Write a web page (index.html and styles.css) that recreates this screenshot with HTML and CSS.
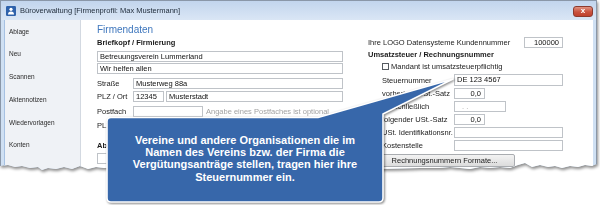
FILE: index.html
```html
<!DOCTYPE html>
<html lang="de">
<head>
<meta charset="utf-8">
<title>Büroverwaltung</title>
<link rel="stylesheet" href="styles.css">
</head>
<body>
<div class="stage">
  <div class="shot">
    <div class="window">
      <div class="titlebar">
        <svg class="appicon" width="10" height="10" viewBox="0 0 10 10">
          <rect x="0" y="0" width="10" height="10" rx="1.2" fill="#2f62ab"/>
          <circle cx="5" cy="3.3" r="1.6" fill="#fff"/>
          <path d="M2 8.4 Q2 5.4 5 5.4 Q8 5.4 8 8.4 Z" fill="#fff"/>
        </svg>
        <span class="title">Büroverwaltung [Firmenprofil: Max Mustermann]</span>
        <span class="close">x</span>
      </div>
      <div class="body">
        <nav class="sidebar">
          <div class="nav-item">Ablage</div>
          <div class="nav-item">Neu</div>
          <div class="nav-item">Scannen</div>
          <div class="nav-item">Aktennotizen</div>
          <div class="nav-item">Wiedervorlagen</div>
          <div class="nav-item">Konten</div>
        </nav>
        <main class="main">
          <section class="col-left">
            <h1 class="section-title">Firmendaten</h1>
            <h2 class="group-title">Briefkopf / Firmierung</h2>
            <div class="field first">Betreuungsverein Lummerland</div>
            <div class="field second">Wir helfen allen</div>
            <div class="row r-street"><span class="lbl">Straße</span><div class="field grow">Musterweg 88a</div></div>
            <div class="row r-plz"><span class="lbl">PLZ / Ort</span><div class="field plz">12345</div><div class="field grow">Musterstadt</div></div>
            <div class="row r-pf"><span class="lbl">Postfach</span><div class="field pf"></div><span class="hint">Angabe eines Postfaches ist optional</span></div>
            <div class="row r-pfplz"><span class="lbl">PLZ / Ort</span><div class="field plz"></div><div class="field grow"></div></div>
            <h2 class="group-title ab">Abweichende Rechnungsanschrift</h2>
            <div class="field ab-field"></div>
          </section>
          <section class="col-right">
            <div class="kd-row"><span class="lbl">Ihre LOGO Datensysteme Kundennummer</span><div class="field num kdnr">100000</div></div>
            <h2 class="group-title ust">Umsatzsteuer / Rechnungsnummer</h2>
            <div class="check"><span class="box"></span><span>Mandant ist umsatzsteuerpflichtig</span></div>
            <div class="tax-grid">
              <span class="lbl">Steuernummer</span><div class="field tall">DE 123 4567</div>
              <span class="lbl">vorheriger USt.-Satz</span><div class="field num short">0,0</div>
              <span class="lbl">ausschließlich</span><div class="field date">. .</div>
              <span class="lbl">folgender USt.-Satz</span><div class="field num short">0,0</div>
              <span class="lbl">USt. Identifikationsnr.</span><div class="field"></div>
              <span class="lbl">Kostenstelle</span><div class="field"></div>
            </div>
            <div class="btn">Rechnungsnummern Formate...</div>
          </section>
        </main>
      </div>
    </div>
  </div>
  <svg class="callout-shape" width="600" height="205" viewBox="0 0 600 205">
    <path d="M111 117.5 H318 L453 79 L383 114 V198 Q383 202 379 202 H111 Q107 202 107 198 V121.5 Q107 117.5 111 117.5 Z" fill="#3767aa" stroke="#ffffff" stroke-width="1.6" stroke-linejoin="round"/>
  </svg>
  <div class="callout-text">Vereine und andere Organisationen die im<br>Namen des Vereins bzw. der Firma die<br>Vergütungsanträge stellen, tragen hier ihre<br>Steuernummer ein.</div>
</div>
</body>
</html>
```
FILE: styles.css
```css
* { box-sizing: border-box; margin: 0; padding: 0; }
html, body { width: 600px; height: 205px; overflow: hidden; background: #ffffff; }
body { font-family: "Liberation Sans", Arial, sans-serif; color: #1b1b1b; }

.stage { position: relative; width: 600px; height: 205px; }

.shot { width: 597px; filter: drop-shadow(1px 2px 1.5px rgba(0, 0, 0, 0.45)); }

.window {
  width: 597px;
  height: 172px;
  border: 1px solid #8a97a8;
  border-bottom: none;
  background: #cfe0f3;
  display: flex;
  flex-direction: column;
  clip-path: polygon(0 0, 597px 0, 597px 164px, 592px 166px, 585px 165px, 578px 167px, 570px 166px, 562px 168px, 555px 166px, 548px 167px, 540px 165px, 532px 167px, 525px 163px, 518px 165px, 510px 168px, 500px 167px, 490px 168px, 480px 167px, 470px 169px, 460px 168px, 450px 167px, 440px 168px, 420px 168px, 380px 169px, 300px 169px, 200px 169px, 110px 168px, 104px 168px, 96px 167px, 88px 169px, 80px 166px, 72px 169px, 64px 167px, 56px 169px, 48px 168px, 42px 170px, 38px 167px, 30px 168px, 22px 166px, 15px 167px, 8px 165px, 0 166px);
}

.titlebar {
  height: 19px;
  flex: none;
  display: flex;
  align-items: center;
  padding-left: 5px;
  background: linear-gradient(#c2d5ed, #dae6f5);
}
.appicon { flex: none; margin-right: 4px; margin-top: 1px; }
.title { font-size: 7.5px; color: #1e2a38; }
.close {
  margin-left: auto;
  margin-right: 3px;
  margin-top: 2px;
  width: 20px;
  height: 11px;
  border: 1px solid #8c3a2e;
  border-radius: 3px;
  background: linear-gradient(#e09280, #c9513d 55%, #c0412d);
  color: #ffffff;
  font-size: 8px;
  font-weight: bold;
  line-height: 8px;
  text-align: center;
}

.body { flex: 1; display: flex; padding: 0 3px 0 3px; }

.sidebar {
  width: 77px;
  flex: none;
  background: #eff2f6;
  border-left: 1px solid #a6c1e2;
  border-right: 1px solid #d3d9e1;
  padding-top: 0.5px;
}
.nav-item { height: 22.8px; line-height: 22.8px; padding-left: 4px; font-size: 6.5px; color: #2a2a2a; }

.main { flex: 1; background: #ffffff; display: flex; padding: 4px 0 0 16px; }

.lbl { font-size: 7.5px; color: #1b1b1b; white-space: nowrap; }

.field {
  height: 11px;
  border: 1px solid #bfc3c8;
  background: #ffffff;
  font-size: 7.5px;
  line-height: 9px;
  padding: 0 2px;
  color: #111111;
  white-space: nowrap;
  overflow: hidden;
}
.field.num { text-align: right; padding-right: 3px; }

.col-left { width: 246px; flex: none; display: flex; flex-direction: column; }
.section-title { font-size: 10px; line-height: 12px; font-weight: normal; color: #3f77bd; }
.group-title { font-size: 7.5px; line-height: 10px; font-weight: bold; color: #1b1b1b; margin-top: 2px; }
.field.first { margin-top: 3px; }
.field.second { margin-top: 1px; }
.row { display: flex; align-items: center; gap: 2px; }
.row .lbl { width: 34px; flex: none; }
.row .grow { flex: 1; }
.r-street { margin-top: 4px; }
.r-plz { margin-top: 2px; }
.r-pf { margin-top: 4px; }
.r-pfplz { margin-top: 3px; }
.field.plz { width: 31px; flex: none; }
.field.pf { width: 70px; flex: none; }
.hint { font-size: 7.5px; color: #a2a2a2; margin-left: 1px; white-space: nowrap; }
.group-title.ab { margin-top: 10px; }
.field.ab-field { margin-top: 2px; }

.col-right { width: 195px; flex: none; margin-left: 25px; padding-top: 13px; display: flex; flex-direction: column; }
.kd-row { display: flex; align-items: center; justify-content: space-between; }
.field.kdnr { width: 39px; }
.group-title.ust { margin-top: 2px; line-height: 9px; }
.check { display: flex; align-items: center; margin-top: 3px; padding-left: 14px; height: 9px; font-size: 7.5px; }
.check .box { width: 7px; height: 7px; border: 1px solid #555a60; background: #fdfdfd; margin-right: 2px; }

.tax-grid {
  display: grid;
  grid-template-columns: 72px 1fr;
  row-gap: 2px;
  align-items: center;
  margin-top: 3px;
  padding-left: 14px;
  justify-items: start;
}
.tax-grid .field { width: 109px; }
.tax-grid .field.tall { height: 12px; line-height: 10px; }
.tax-grid .field.short { width: 31px; }
.tax-grid .field.date { width: 52px; color: #a8a8a8; padding-left: 7px; }

.btn {
  margin-top: 3px;
  margin-left: 6px;
  width: 141px;
  height: 13px;
  border: 1px solid #a9acb0;
  border-radius: 2px;
  background: linear-gradient(#f3f3f3, #dcdcdc);
  font-size: 7.5px;
  line-height: 11px;
  text-align: center;
  color: #1b1b1b;
}

.callout-shape {
  position: absolute;
  left: 0;
  top: 0;
  filter: drop-shadow(1px 1.5px 1.2px rgba(0, 0, 0, 0.5));
}
.callout-text {
  position: absolute;
  left: 107px;
  top: 117px;
  width: 276px;
  padding-top: 17px;
  text-align: center;
  color: #ffffff;
  font-size: 11px;
  font-weight: bold;
  line-height: 12.2px;
}
```
